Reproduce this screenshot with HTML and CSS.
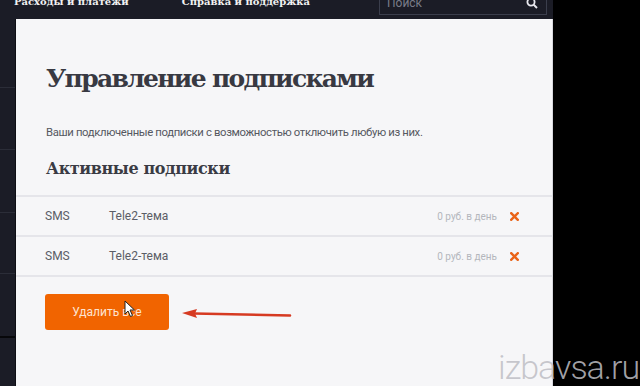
FILE: index.html
```html
<!DOCTYPE html>
<html lang="ru">
<head>
<meta charset="utf-8">
<title>Управление подписками</title>
<link rel="stylesheet" href="styles.css">
</head>
<body>
<div class="screen">
  <div class="app">
    <header class="topbar">
      <nav class="nav">
        <a class="nav-link">Расходы и платежи</a>
        <a class="nav-link">Справка и поддержка</a>
      </nav>
      <div class="search">
        <span class="search-ph">Поиск</span>
        <svg class="search-icon" width="12" height="12" viewBox="0 0 12 12"><circle cx="5" cy="5" r="3.6" fill="none" stroke="#e8e8ee" stroke-width="1.8"/><line x1="7.6" y1="7.6" x2="11" y2="11" stroke="#e8e8ee" stroke-width="2"/></svg>
      </div>
    </header>
    <div class="body-row">
      <aside class="side">
        <div class="side-seg s1"></div>
        <div class="side-seg s2"></div>
        <div class="side-seg s3"></div>
        <div class="side-seg s4"></div>
        <div class="side-seg s5"></div>
        <div class="side-seg s6"></div>
      </aside>
      <main class="modal">
        <h1 class="title">Управление подписками</h1>
        <p class="lead">Ваши подключенные подписки с возможностью отключить любую из них.</p>
        <h2 class="subtitle">Активные подписки</h2>
        <ul class="subs">
          <li class="sub-row">
            <span class="sub-type">SMS</span>
            <span class="sub-name">Tele2-тема</span>
            <span class="sub-price">0 руб. в день</span>
            <svg class="sub-x" width="9" height="9" viewBox="0 0 9 9"><path d="M1.2 1.2 L7.8 7.8 M7.8 1.2 L1.2 7.8" stroke="#ea6419" stroke-width="2.4" stroke-linecap="square"/></svg>
          </li>
          <li class="sub-row">
            <span class="sub-type">SMS</span>
            <span class="sub-name">Tele2-тема</span>
            <span class="sub-price">0 руб. в день</span>
            <svg class="sub-x" width="9" height="9" viewBox="0 0 9 9"><path d="M1.2 1.2 L7.8 7.8 M7.8 1.2 L1.2 7.8" stroke="#ea6419" stroke-width="2.4" stroke-linecap="square"/></svg>
          </li>
        </ul>
        <div class="actions">
          <button class="btn-delete">Удалить все</button>
        </div>
      </main>
    </div>
  </div>
  <div class="outside"></div>

  <svg class="arrow" width="120" height="16" viewBox="0 0 120 16">
    <path d="M14 7.5 L110 9.5" stroke="#d63a22" stroke-width="2.6" stroke-linecap="round"/>
    <path d="M2 7 L17 3 L15 7.5 L17 12 Z" fill="#d63a22"/>
  </svg>
  <svg class="cursor" width="12" height="18" viewBox="0 0 12 18">
    <path d="M1 1 L1 14 L4 11 L6.5 16.5 L8.5 15.5 L6 10 L10.5 10 Z" fill="#ffffff" stroke="#222" stroke-width="1"/>
  </svg>
  <div class="watermark">izbavsa.ru</div>
</div>
</body>
</html>
```

FILE: styles.css
```css
html, body {
  margin: 0;
  padding: 0;
  background: #000;
}
.screen {
  position: relative;
  width: 640px;
  height: 386px;
  overflow: hidden;
  display: flex;
  background: #000;
}
.app {
  width: 553px;
  display: flex;
  flex-direction: column;
  background: #1b1c26;
}
.outside {
  flex: 1;
  background: #000;
}
.topbar {
  height: 19px;
  display: flex;
  justify-content: space-between;
  overflow: hidden;
  box-sizing: border-box;
}
.nav {
  display: flex;
  align-items: flex-end;
  height: 7px;
  padding-left: 14px;
  gap: 53px;
}
.nav-link {
  font-family: "DejaVu Serif", serif;
  font-weight: bold;
  font-size: 10px;
  line-height: 10px;
  color: #f2f2f2;
  white-space: nowrap;
}
.search {
  width: 168px;
  height: 15px;
  margin-right: 6px;
  box-sizing: border-box;
  border: 1px solid #3b3e4c;
  border-top: none;
  display: flex;
  justify-content: space-between;
  align-items: flex-end;
  padding: 0 8px 5px 7px;
}
.search-ph {
  font-family: "Roboto", sans-serif;
  font-size: 12px;
  line-height: 12px;
  color: #7a7d89;
}
.body-row {
  flex: 1;
  display: flex;
}
.side {
  width: 15px;
  border-right: 1px solid #0d0e14;
  display: flex;
  flex-direction: column;
  background: #1b1c26;
}
.side-seg {
  border-bottom: 1px solid #2b2d38;
}
.s1 { height: 68px; }
.s2 { height: 61px; }
.s3 { height: 62px; }
.s4 { height: 60px; }
.s5 { height: 62px; border-bottom: 2px solid #07070a; }
.s6 { flex: 1; border-bottom: none; }
.modal {
  flex: 1;
  background: #f6f6f8;
  border-right: 1px solid #d8d8de;
  padding-top: 40px;
}
.title {
  margin: 0 0 0 30px;
  font-family: "DejaVu Serif", serif;
  font-weight: bold;
  font-size: 25px;
  line-height: 40px;
  letter-spacing: -1.7px;
  color: #383942;
}
.lead {
  margin: 26px 0 0 30px;
  font-family: "Roboto", sans-serif;
  font-size: 11.3px;
  line-height: 16px;
  letter-spacing: -0.35px;
  color: #555861;
}
.subtitle {
  margin: 16px 0 0 30px;
  font-family: "DejaVu Serif", serif;
  font-weight: bold;
  font-size: 16px;
  line-height: 24px;
  letter-spacing: -0.4px;
  color: #3a3b44;
}
.subs {
  list-style: none;
  margin: 14px 0 0 0;
  padding: 0;
  border-top: 2px solid #e5e5ea;
}
.sub-row {
  height: 38px;
  border-bottom: 2px solid #e5e5ea;
  display: flex;
  align-items: center;
  padding-left: 29px;
  padding-right: 33px;
  font-family: "Roboto", sans-serif;
}
.sub-type {
  width: 64px;
  font-size: 12px;
  color: #5a5d66;
}
.sub-name {
  flex: 1;
  font-size: 12px;
  color: #5a5d66;
}
.sub-price {
  font-size: 10px;
  color: #b4b6bd;
  margin-right: 13px;
}
.sub-x {
  display: block;
}
.actions {
  padding: 17px 0 0 29px;
}
.btn-delete {
  width: 124px;
  height: 36px;
  border: none;
  border-radius: 3px;
  background: #f16400;
  color: #fde3d0;
  font-family: "Roboto", sans-serif;
  font-size: 12px;
  padding: 0;
}
.arrow {
  position: absolute;
  left: 180px;
  top: 306px;
}
.cursor {
  position: absolute;
  left: 124px;
  top: 300px;
}
.watermark {
  position: absolute;
  left: 498px;
  top: 348px;
  font-family: "Roboto", sans-serif;
  font-weight: 300;
  font-size: 34px;
  line-height: 38px;
  color: rgba(190, 190, 196, 0.85);
  letter-spacing: -1px;
  white-space: nowrap;
}
```
